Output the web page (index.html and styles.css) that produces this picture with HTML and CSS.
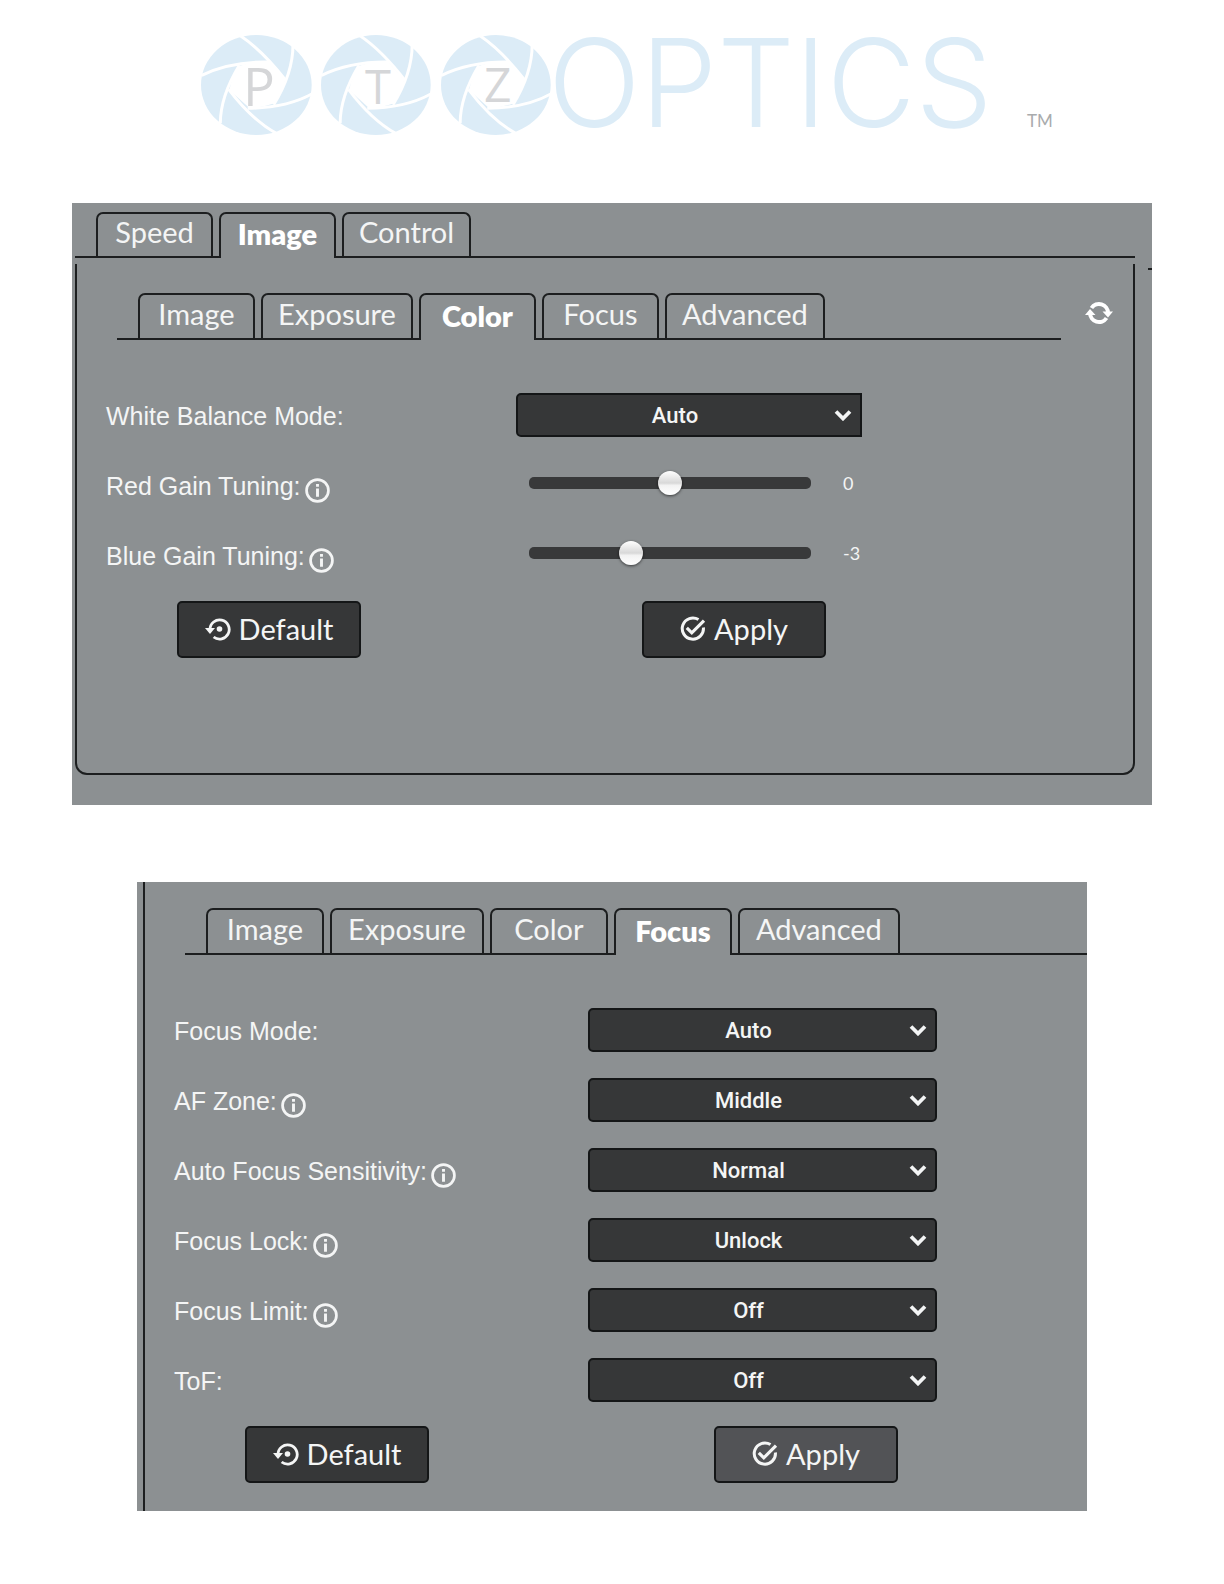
FILE: index.html
```html
<!DOCTYPE html>
<html lang="en">
<head>
    <meta charset="UTF-8">
    <meta name="viewport" content="width=device-width, initial-scale=1.0">
    <title>PTZOptics - Camera Settings</title>
    <link rel="stylesheet" href="styles.css">
</head>
<body>
    <!-- Shared icons -->
    <svg class="sprite" aria-hidden="true">
        <symbol id="aperture" viewBox="32 45 333 300" preserveAspectRatio="none">
            <ellipse cx="198" cy="195" rx="166" ry="150" fill="#dcecf7"/>
            <path d="M145 138 Q180 126 235 125 L285 180 Q272 220 253 250 Q215 263 178 265 L117 210 Q125 170 145 138Z" fill="#fff"/>
            <g fill="none" stroke="#fff" stroke-width="9">
                <path d="M148 46 Q215 90 287 182"/>
                <path d="M308 74 Q308 160 250 254"/>
                <path d="M368 220 Q290 264 172 265"/>
                <path d="M258 340 Q185 300 115 208"/>
                <path d="M90 310 Q90 230 147 136"/>
                <path d="M34 166 Q120 124 238 126"/>
            </g>
        </symbol>
        <symbol id="info" viewBox="0 0 24 24">
            <circle cx="12" cy="12" r="10.5" fill="none" stroke="currentColor" stroke-width="2.6"/>
            <path d="M10.6 5.8h2.8v2.6h-2.8zM10.6 10h2.8v8h-2.8z" fill="currentColor"/>
        </symbol>
        <symbol id="chevron" viewBox="0 0 18 12">
            <path d="M2 2.5l7 7 7-7" fill="none" stroke="currentColor" stroke-width="3.8"/>
        </symbol>
        <symbol id="restore" viewBox="0 0 26 24">
            <path d="M5 12.5A9.6 9.6 0 1 1 8.6 20" fill="none" stroke="currentColor" stroke-width="2.8"/>
            <path d="M0 11h10l-5 6z" fill="currentColor"/>
            <circle cx="14.5" cy="12" r="2.8" fill="currentColor"/>
        </symbol>
        <symbol id="check" viewBox="0 0 26 26">
            <path d="M18.5 3.6A10.6 10.6 0 1 0 23.4 11.5" fill="none" stroke="currentColor" stroke-width="3"/>
            <path d="M6.8 11.8l5 5L24 4.6" fill="none" stroke="currentColor" stroke-width="3.2"/>
        </symbol>
        <symbol id="refresh" viewBox="0 0 28 24">
            <g fill="none" stroke="currentColor" stroke-width="4">
                <path d="M6.5 7A9 9 0 0 1 23 12"/>
                <path d="M21.5 17A9 9 0 0 1 5 12"/>
            </g>
            <path d="M0 14l5-6 5.5 6zM28 10.5l-5 6-5.5-6z" fill="currentColor"/>
        </symbol>
    </svg>

    <header class="header">
        <svg class="logo" viewBox="168 34 888 102" role="img" aria-label="PTZOptics">
            <use href="#aperture" x="201" y="35" width="111" height="100"/>
            <use href="#aperture" x="321" y="35" width="110" height="100"/>
            <use href="#aperture" x="441" y="35" width="110" height="100"/>
            <text class="logo-letter" x="243" y="106" font-size="53">P</text>
            <text class="logo-letter" x="365" y="104" font-size="47">T</text>
            <text class="logo-letter" x="484" y="102" font-size="48">Z</text>
            <text class="logo-word" x="548" y="127">OPTICS</text>
            <text class="logo-tm" x="1027" y="127">TM</text>
        </svg>
    </header>

    <main>
        <section class="panel panel-color">
            <nav class="tabs" aria-label="Settings">
                <button type="button" class="tab">Speed</button>
                <button type="button" class="tab active">Image</button>
                <button type="button" class="tab">Control</button>
            </nav>
            <div class="box">
                <div class="box-header">
                    <nav class="tabs" aria-label="Image settings">
                        <button type="button" class="tab">Image</button>
                        <button type="button" class="tab">Exposure</button>
                        <button type="button" class="tab active">Color</button>
                        <button type="button" class="tab">Focus</button>
                        <button type="button" class="tab">Advanced</button>
                    </nav>
                    <button type="button" class="refresh" aria-label="Refresh"><svg><use href="#refresh"/></svg></button>
                </div>
                <form class="settings">
                    <div class="row">
                        <label class="label" for="whiteBalance">White Balance Mode:</label>
                        <div class="select select-square">
                            <select id="whiteBalance"><option>Auto</option></select>
                            <svg><use href="#chevron"/></svg>
                        </div>
                    </div>
                    <div class="row">
                        <label class="label" for="redGain">Red Gain Tuning:<svg class="info"><use href="#info"/></svg></label>
                        <div class="slider">
                            <input type="range" id="redGain" min="-10" max="10" value="0">
                            <output for="redGain">0</output>
                        </div>
                    </div>
                    <div class="row">
                        <label class="label" for="blueGain">Blue Gain Tuning:<svg class="info"><use href="#info"/></svg></label>
                        <div class="slider">
                            <input type="range" id="blueGain" min="-10" max="10" value="-3">
                            <output for="blueGain">-3</output>
                        </div>
                    </div>
                    <div class="row actions">
                        <button type="button" class="button"><svg><use href="#restore"/></svg>Default</button>
                        <button type="button" class="button button-apply"><svg><use href="#check"/></svg>Apply</button>
                    </div>
                </form>
            </div>
        </section>

        <section class="panel panel-focus">
            <div class="box">
                <div class="box-header">
                    <nav class="tabs" aria-label="Image settings">
                        <button type="button" class="tab">Image</button>
                        <button type="button" class="tab">Exposure</button>
                        <button type="button" class="tab">Color</button>
                        <button type="button" class="tab active">Focus</button>
                        <button type="button" class="tab">Advanced</button>
                    </nav>
                </div>
                <form class="settings">
                    <div class="row">
                        <label class="label" for="focusMode">Focus Mode:</label>
                        <div class="select">
                            <select id="focusMode"><option>Auto</option></select>
                            <svg><use href="#chevron"/></svg>
                        </div>
                    </div>
                    <div class="row">
                        <label class="label" for="afZone">AF Zone:<svg class="info"><use href="#info"/></svg></label>
                        <div class="select">
                            <select id="afZone"><option>Middle</option></select>
                            <svg><use href="#chevron"/></svg>
                        </div>
                    </div>
                    <div class="row">
                        <label class="label" for="sensitivity">Auto Focus Sensitivity:<svg class="info"><use href="#info"/></svg></label>
                        <div class="select">
                            <select id="sensitivity"><option>Normal</option></select>
                            <svg><use href="#chevron"/></svg>
                        </div>
                    </div>
                    <div class="row">
                        <label class="label" for="focusLock">Focus Lock:<svg class="info"><use href="#info"/></svg></label>
                        <div class="select">
                            <select id="focusLock"><option>Unlock</option></select>
                            <svg><use href="#chevron"/></svg>
                        </div>
                    </div>
                    <div class="row">
                        <label class="label" for="focusLimit">Focus Limit:<svg class="info"><use href="#info"/></svg></label>
                        <div class="select">
                            <select id="focusLimit"><option>Off</option></select>
                            <svg><use href="#chevron"/></svg>
                        </div>
                    </div>
                    <div class="row">
                        <label class="label" for="tof">ToF:</label>
                        <div class="select">
                            <select id="tof"><option>Off</option></select>
                            <svg><use href="#chevron"/></svg>
                        </div>
                    </div>
                    <div class="row actions">
                        <button type="button" class="button"><svg><use href="#restore"/></svg>Default</button>
                        <button type="button" class="button button-apply highlighted"><svg><use href="#check"/></svg>Apply</button>
                    </div>
                </form>
            </div>
        </section>
    </main>
</body>
</html>
```
FILE: styles.css
```css
* {
    box-sizing: border-box;
    margin: 0;
    padding: 0;
}

body {
    background: #fff;
    color: #f4f5f5;
    font-family: Lato, sans-serif;
}

.sprite {
    position: absolute;
    width: 0;
    height: 0;
}

.header {
    padding: 34px 72px 67px;
}

.logo {
    display: block;
    width: 100%;
    max-width: 888px;
    margin: 0 auto;
    overflow: visible;
}

.logo-letter {
    font-family: "Open Sans", sans-serif;
    fill: #d5d6d8;
}

.logo-word {
    font-family: Inter, sans-serif;
    font-size: 122px;
    font-weight: 300;
    fill: #dcecf7;
}

.logo-tm {
    font-size: 17px;
    fill: #a9abad;
}

/* Panels */

.panel {
    background: #8c9092;
}

.panel-color {
    --field-start: 410px;
    --field-width: 346px;
    --tab-width: 117px;
    --tab-padding: 15px;
    position: relative;
    margin: 0 72px 77px;
    padding: 9px 17px 30px 3px;
}

/* Edge of the neighbouring panel */
.panel-color::after {
    content: "";
    position: absolute;
    top: 65px;
    right: 0;
    width: 4px;
    height: 2px;
    background: #1c1e1f;
}

.panel-focus {
    --field-start: 414px;
    --field-width: 349px;
    --tab-width: 118px;
    --tab-padding: 16px;
    margin: 0 137px 72px;
    padding-left: 6px;
}

.panel-color .box {
    margin-top: 6px;
    padding: 29px 0 115px;
    border: 2px solid #1c1e1f;
    border-top: none;
    border-radius: 0 0 12px 12px;
}

.panel-focus .box {
    padding: 26px 0 28px;
    border-left: 2px solid #1c1e1f;
}

.box-header {
    display: flex;
    gap: 24px;
    padding-left: 40px;
}

.panel-color .box-header {
    padding-right: 20px;
}

.box-header .tabs {
    flex: 1;
    height: 47px;
}

/* Tabs */

.tabs {
    display: flex;
    gap: 6px;
    height: 46px;
    padding-left: 21px;
    border-bottom: 2px solid #1c1e1f;
}

.tab {
    min-width: var(--tab-width);
    padding: 0 var(--tab-padding) 7px;
    border: 2px solid #1c1e1f;
    border-bottom: none;
    border-radius: 7px 7px 0 0;
    background: #8c9092;
    color: inherit;
    font-family: inherit;
    font-size: 29px;
    line-height: 35px;
    cursor: pointer;
}

.tab.active {
    margin-bottom: -2px;
    padding-bottom: 5px;
    color: #fff;
    font-weight: 800;
}

.refresh {
    width: 28px;
    height: 40px;
    border: none;
    background: none;
    color: #fff;
    cursor: pointer;
}

.refresh svg {
    display: block;
    width: 28px;
    height: 24px;
}

/* Settings */

.settings {
    display: flex;
    flex-direction: column;
    gap: 26px;
    padding: 53px 29px 0;
}

.row {
    display: grid;
    grid-template-columns: var(--field-start) minmax(0, var(--field-width));
    align-items: center;
    min-height: 44px;
}

.label {
    display: flex;
    align-items: center;
    gap: 4px;
    padding-top: 2px;
    font-family: "Liberation Sans", Arial, sans-serif;
    font-size: 25px;
    line-height: 30px;
}

.info {
    width: 25px;
    height: 25px;
    margin-top: 8px;
}

.select {
    position: relative;
}

.select select {
    display: block;
    width: 100%;
    height: 44px;
    padding: 0 40px 0 12px;
    border: 2px solid #141617;
    border-radius: 5px;
    background: #363738;
    color: inherit;
    font-family: Roboto, sans-serif;
    font-size: 22px;
    font-weight: 500;
    text-align-last: center;
    appearance: none;
    cursor: pointer;
}

.select-square select {
    border-radius: 5px 0 0 5px;
}

.select svg {
    position: absolute;
    top: 16px;
    right: 10px;
    width: 18px;
    height: 12px;
    pointer-events: none;
}

.slider {
    display: flex;
    align-items: center;
    gap: 32px;
    padding: 0 0 4px 13px;
}

.slider input {
    width: 282px;
    height: 12px;
    border-radius: 5px;
    background: #38393a;
    appearance: none;
    cursor: pointer;
}

.slider input::-webkit-slider-thumb {
    width: 24px;
    height: 24px;
    border-radius: 50%;
    background: linear-gradient(#fff 0%, #d8d8d8 50%, #f2f2f2 60%, #fff 100%);
    box-shadow: 0 1px 3px rgba(0, 0, 0, 0.6);
    appearance: none;
}

.slider output {
    font-size: 18px;
}

.actions {
    margin-top: -2px;
}

.button {
    display: flex;
    align-items: center;
    justify-content: center;
    gap: 8px;
    width: 184px;
    height: 57px;
    margin-left: 71px;
    padding-bottom: 2px;
    border: 2px solid #141617;
    border-radius: 5px;
    background: #363738;
    color: inherit;
    font-family: inherit;
    font-size: 29px;
    cursor: pointer;
}

.button svg {
    width: 26px;
    height: 26px;
}

.button-apply {
    margin-left: 126px;
}

.button.highlighted {
    background: #525356;
}
```
